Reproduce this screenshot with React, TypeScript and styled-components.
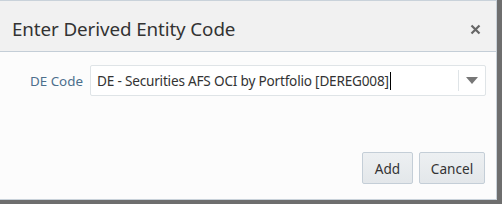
import React from "react";
import styled, { createGlobalStyle } from "styled-components";

const GlobalStyle = createGlobalStyle`
  html, body {
    margin: 0;
    padding: 0;
    background: #6e6e6e;
  }
  body {
    font-family: "Noto Sans", "Open Sans", Arial, sans-serif;
  }
`;

const Dialog = styled.div`
  width: 496px;
  height: 198px;
  background: #fcfcfc;
  border-top: 1px solid #c9d2da;
  border-right: 1px solid #c9d2da;
  border-bottom: 1px solid #c9d2da;
  display: flex;
  flex-direction: column;
  box-sizing: content-box;
`;

const Header = styled.div`
  height: 50px;
  background: #f1f1f1;
  border-bottom: 1px solid #c4ced7;
  display: flex;
  align-items: center;
  justify-content: space-between;
  padding: 0 14px 0 12px;
`;

const Title = styled.h1`
  margin: 0;
  font-size: 18.8px;
  font-weight: 400;
  color: #333;
  letter-spacing: -0.1px;
  padding-top: 6px;
`;

const CloseButton = styled.button`
  border: none;
  background: transparent;
  padding: 0;
  width: 14px;
  height: 14px;
  cursor: pointer;
  margin-top: 6px;
  display: flex;
  align-items: center;
  justify-content: center;
`;

const Body = styled.div`
  flex: 1;
  padding: 13px 10px 0 0;
`;

const FieldRow = styled.div`
  display: flex;
  align-items: center;
  gap: 7px;
`;

const Label = styled.label`
  width: 83px;
  text-align: right;
  font-size: 13.4px;
  color: #4c6f8c;
`;

const Select = styled.div`
  width: 394px;
  height: 29px;
  background: #fff;
  border: 1px solid #dfe4e7;
  border-radius: 2px;
  display: flex;
  align-items: center;
`;

const Value = styled.div`
  flex: 1;
  padding-left: 6px;
  font-size: 13.6px;
  letter-spacing: -0.2px;
  color: #333;
  white-space: nowrap;
  display: flex;
  align-items: center;
`;

const Caret = styled.span`
  display: inline-block;
  width: 1px;
  height: 18px;
  background: #000;
  margin-left: 1px;
`;

const Divider = styled.div`
  width: 1px;
  height: 21px;
  background: #dfe4e7;
`;

const Arrow = styled.div`
  width: 26px;
  display: flex;
  justify-content: center;
  align-items: center;
`;

const Footer = styled.div`
  display: flex;
  justify-content: flex-end;
  gap: 6px;
  padding: 0 11px 15px 0;
`;

const Button = styled.button<{ $width: number }>`
  width: ${(p) => p.$width}px;
  height: 32px;
  padding: 0;
  background: linear-gradient(#edf0f2, #e3e7ea);
  border: 1px solid #c4ced7;
  border-radius: 2px;
  font-family: "Noto Sans", "Open Sans", Arial, sans-serif;
  font-size: 13.6px;
  color: #333;
  cursor: pointer;
`;

export default function App() {
  return (
    <>
      <GlobalStyle />
      <Dialog>
        <Header>
          <Title>Enter Derived Entity Code</Title>
          <CloseButton aria-label="Close">
            <svg width="11" height="11" viewBox="0 0 11 11">
              <path
                d="M1.5 1.5 L9.5 9.5 M9.5 1.5 L1.5 9.5"
                stroke="#666"
                strokeWidth="2.2"
              />
            </svg>
          </CloseButton>
        </Header>
        <Body>
          <FieldRow>
            <Label>DE Code</Label>
            <Select>
              <Value>
                DE - Securities AFS OCI by Portfolio [DEREG008]
                <Caret />
              </Value>
              <Divider />
              <Arrow>
                <svg width="12" height="7" viewBox="0 0 12 7">
                  <path d="M0 0 H12 L6 7 Z" fill="#777" />
                </svg>
              </Arrow>
            </Select>
          </FieldRow>
        </Body>
        <Footer>
          <Button $width={51}>Add</Button>
          <Button $width={66}>Cancel</Button>
        </Footer>
      </Dialog>
    </>
  );
}
